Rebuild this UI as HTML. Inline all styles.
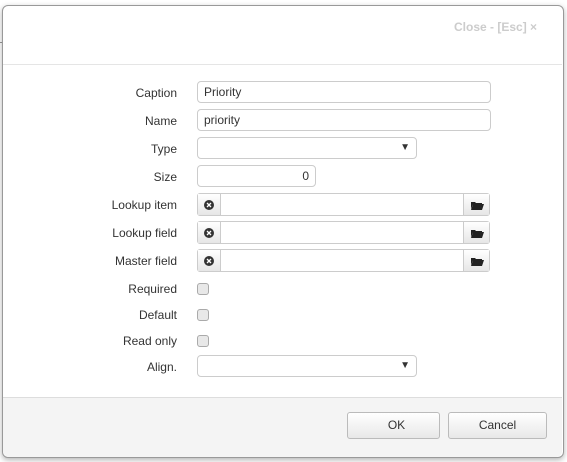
<!DOCTYPE html>
<html><head><style>
body{margin:0;width:567px;height:462px;background:#fff;position:relative;overflow:hidden;font-family:"Liberation Sans",sans-serif;font-size:12px;color:#333}
.m{position:absolute;left:2px;top:5px;width:560px;height:451px;border:1px solid #999;border-radius:6px;background:#fff;box-shadow:0 2px 6px rgba(0,0,0,.3);overflow:hidden}
.a{position:absolute}
.l{position:absolute;right:390px;text-align:right;width:120px}
.in{position:absolute;border:1px solid #ccc;border-radius:4px;box-sizing:border-box;background:#fff;padding:0 6px;line-height:20px;height:22px}
.cb{position:absolute;left:197px;width:12px;height:12px;border:1px solid #aaa;border-radius:3px;background:#e8e8e8;box-sizing:border-box}
.lk{position:absolute;left:197px;width:293px;height:23px;border:1px solid #ccc;border-radius:3px;box-sizing:border-box;background:#fff}
.lk .b1{position:absolute;left:0;top:0;width:22px;height:21px;background:linear-gradient(#fff,#e6e6e6);border-right:1px solid #ccc}
.lk .b2{position:absolute;right:0;top:0;width:25px;height:21px;background:linear-gradient(#fff,#e6e6e6);border-left:1px solid #ccc}
.btn{position:absolute;top:412px;height:27px;border:1px solid #bbb;border-radius:3px;box-sizing:border-box;background:linear-gradient(#fff,#e8e8e8);text-align:center;line-height:25px;font-size:12px;color:#333}
</style></head><body>
<div class="a" style="left:0;top:42px;width:2px;height:1px;background:#999"></div>
<div class="m"></div>
<div class="a" style="left:454px;top:20px;color:#ccc;font-weight:bold;font-size:12px">Close - [Esc] ×</div>
<div class="a" style="left:3px;top:64px;width:559px;height:1px;background:#e5e5e5"></div>
<div class="a" style="left:3px;top:397px;width:559px;height:59px;background:#f4f4f4;border-top:1px solid #ddd;border-radius:0 0 6px 6px"></div>

<div class="l" style="top:86px">Caption</div>
<div class="in" style="left:197px;top:81px;width:294px">Priority</div>
<div class="l" style="top:114px">Name</div>
<div class="in" style="left:197px;top:109px;width:294px">priority</div>
<div class="l" style="top:142px">Type</div>
<div class="in" style="left:197px;top:137px;width:220px"><span style="position:absolute;right:6px;font-size:10px">▼</span></div>
<div class="l" style="top:170px">Size</div>
<div class="in" style="left:197px;top:165px;width:119px;text-align:right">0</div>
<div class="l" style="top:198px">Lookup item</div>
<div class="lk" style="top:193px"><div class="b1"><svg width="22" height="21"><circle cx="11" cy="11" r="5" fill="#333"/><path d="M9 9l4 4M13 9l-4 4" stroke="#fff" stroke-width="1.3"/></svg></div><div class="b2"><svg width="25" height="21"><path d="M7 8h4l1 1h6v1h-9l-2 5z M9 10h11l-2 6h-11z" fill="#222"/></svg></div></div>
<div class="l" style="top:226px">Lookup field</div>
<div class="lk" style="top:221px"><div class="b1"><svg width="22" height="21"><circle cx="11" cy="11" r="5" fill="#333"/><path d="M9 9l4 4M13 9l-4 4" stroke="#fff" stroke-width="1.3"/></svg></div><div class="b2"><svg width="25" height="21"><path d="M7 8h4l1 1h6v1h-9l-2 5z M9 10h11l-2 6h-11z" fill="#222"/></svg></div></div>
<div class="l" style="top:254px">Master field</div>
<div class="lk" style="top:249px"><div class="b1"><svg width="22" height="21"><circle cx="11" cy="11" r="5" fill="#333"/><path d="M9 9l4 4M13 9l-4 4" stroke="#fff" stroke-width="1.3"/></svg></div><div class="b2"><svg width="25" height="21"><path d="M7 8h4l1 1h6v1h-9l-2 5z M9 10h11l-2 6h-11z" fill="#222"/></svg></div></div>
<div class="l" style="top:282px">Required</div><div class="cb" style="top:283px"></div>
<div class="l" style="top:308px">Default</div><div class="cb" style="top:309px"></div>
<div class="l" style="top:334px">Read only</div><div class="cb" style="top:335px"></div>
<div class="l" style="top:360px">Align.</div>
<div class="in" style="left:197px;top:355px;width:220px"><span style="position:absolute;right:6px;font-size:10px">▼</span></div>

<div class="btn" style="left:347px;width:93px;padding-left:6px">OK</div>
<div class="btn" style="left:448px;width:99px">Cancel</div>
</body></html>
